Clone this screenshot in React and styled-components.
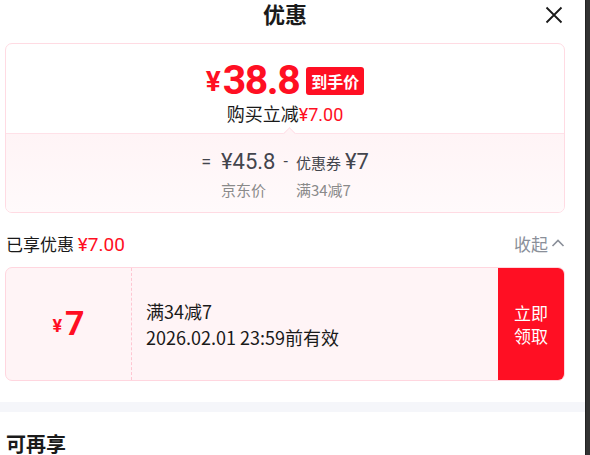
import React from 'react';
import styled, { createGlobalStyle } from 'styled-components';

const GlobalStyle = createGlobalStyle`
  html, body {
    margin: 0;
    padding: 0;
    background: #fff;
    font-family: "Noto Sans CJK SC", "Noto Sans", sans-serif;
    color: #1a1a1a;
  }
`;

const RED = '#ff0f23';
const NUM = 'Roboto, "Noto Sans CJK SC", sans-serif';

const Page = styled.div`
  display: flex;
  width: 590px;
  height: 455px;
  overflow: hidden;
`;

const Main = styled.div`
  width: 585px;
  flex: none;
`;

const ScrollTrack = styled.div`
  flex: 1;
  background: #333;
  border-left: 1px solid #222;
`;

const Header = styled.div`
  position: relative;
  height: 26px;
  padding-right: 15px;
  text-align: center;
  font-size: 22px;
  font-weight: 700;
  line-height: 26px;
  color: #1a1a1a;
`;

const Close = styled.div`
  position: absolute;
  right: 21px;
  top: 2px;
  width: 20px;
  height: 20px;
`;

const Section = styled.div`
  padding: 0 20px 0 5px;
`;

const PriceCard = styled.div`
  margin-top: 17px;
  border: 1px solid #ffdbe3;
  border-radius: 7px;
  overflow: hidden;
`;

const PriceTop = styled.div`
  padding: 16px 0 5px;
  text-align: center;
`;

const PriceRow = styled.div`
  display: flex;
  justify-content: center;
  align-items: center;
  height: 40px;
  line-height: 40px;
  color: ${RED};
  font-family: ${NUM};
`;

const Yen = styled.span`
  font-size: ${p => p.$size || 28}px;
  font-weight: 700;
  margin-right: ${p => p.$gap || 2}px;
  position: relative;
  top: ${p => p.$shift || 2}px;
`;

const BigPrice = styled.span`
  font-size: 41px;
  font-weight: 700;
  letter-spacing: -1.5px;
`;

const Badge = styled.span`
  margin-left: 7px;
  background: ${RED};
  color: #fff;
  font-family: "Noto Sans CJK SC", sans-serif;
  font-weight: 700;
  font-size: 16px;
  height: 28px;
  line-height: 28px;
  padding: 0 5px;
  border-radius: 3px;
  position: relative;
  top: 1px;
`;

const SubLine = styled.div`
  font-size: 18px;
  line-height: 26px;
  color: #1a1a1a;
`;

const Red = styled.span`
  color: ${RED};
  font-family: ${NUM};
  font-size: ${p => (p.$size ? `${p.$size}px` : 'inherit')};
`;

const PriceBottom = styled.div`
  position: relative;
  border-top: 1px solid #ffe1e8;
  background: linear-gradient(180deg, #fff4f6 0%, #fffafb 100%);
  padding: 14px 0 12px;
  display: flex;
  justify-content: center;
  align-items: flex-start;

  &::before {
    content: '';
    position: absolute;
    top: -5px;
    left: 279px;
    width: 8px;
    height: 8px;
    background: #fff4f6;
    border-top: 1px solid #ffe1e8;
    border-left: 1px solid #ffe1e8;
    transform: rotate(45deg);
  }
`;

const Col = styled.div`
  display: flex;
  flex-direction: column;
  align-items: flex-start;
`;

const Value = styled.div`
  display: flex;
  align-items: baseline;
  gap: 3px;
  line-height: 28px;
  height: 28px;
  color: #43454d;
  font-family: ${NUM};
  font-size: 22px;
`;

const Op = styled.div`
  line-height: 28px;
  font-size: ${p => p.$size || 18}px;
  color: #43454d;
  font-family: Roboto, sans-serif;
  margin: ${p => p.$margin || '0 10px 0 0'};
`;

const Small = styled.span`
  font-family: "Noto Sans CJK SC", sans-serif;
  font-size: 15px;
  margin-right: 1px;
`;

const Label = styled.div`
  font-size: 15px;
  line-height: 20px;
  color: #8a8a8a;
  margin-top: 4px;
`;

const SavedRow = styled.div`
  display: flex;
  justify-content: space-between;
  align-items: center;
  margin-top: 19px;
  height: 22px;
  padding-left: 1px;
  font-size: 17px;
`;

const Toggle = styled.div`
  display: flex;
  align-items: center;
  gap: 3px;
  color: #8a8f99;
`;

const Coupon = styled.div`
  margin-top: 13px;
  height: 112px;
  display: flex;
  background: #fff4f6;
  border: 1px solid #ffd6df;
  border-radius: 7px;
  overflow: hidden;
`;

const CouponValue = styled.div`
  width: 126px;
  flex: none;
  border-right: 1px dashed #ffc6d2;
  display: flex;
  align-items: baseline;
  justify-content: center;
  padding-top: 38px;
  box-sizing: border-box;
  color: ${RED};
  font-family: ${NUM};
  font-weight: 700;
`;

const CouponAmount = styled.span`
  font-size: 34px;
  line-height: 34px;
`;

const CouponInfo = styled.div`
  flex: 1;
  padding-left: 14px;
  display: flex;
  flex-direction: column;
  justify-content: center;
  font-size: 18px;
  line-height: 26px;
  color: #1a1a1a;
`;

const GetButton = styled.div`
  width: 66px;
  flex: none;
  background: ${RED};
  color: #fff;
  display: flex;
  align-items: center;
  justify-content: center;
  text-align: center;
  font-size: 17px;
  line-height: 23px;
`;

const Band = styled.div`
  margin-top: 21px;
  height: 10px;
  background: #f5f6fa;
`;

const MoreTitle = styled.div`
  margin-top: 20px;
  padding-left: 6px;
  font-size: 20px;
  font-weight: 700;
  line-height: 24px;
  color: #1a1a1a;
`;

const CloseIcon = () => (
  <svg width="20" height="20" viewBox="0 0 20 20">
    <path d="M2.5 2.5 L17.5 17.5 M17.5 2.5 L2.5 17.5" stroke="#1a1a1a" strokeWidth="1.8" fill="none" />
  </svg>
);

const ChevronUp = () => (
  <svg width="14" height="10" viewBox="0 0 14 10">
    <path d="M1.5 8 L7 2.5 L12.5 8" stroke="#8a8f99" strokeWidth="1.6" fill="none" />
  </svg>
);

export default function App() {
  return (
    <>
      <GlobalStyle />
      <Page>
        <Main>
          <Header>
            优惠
            <Close><CloseIcon /></Close>
          </Header>
          <Section>
            <PriceCard>
              <PriceTop>
                <PriceRow>
                  <Yen>¥</Yen>
                  <BigPrice>38.8</BigPrice>
                  <Badge>到手价</Badge>
                </PriceRow>
                <SubLine>
                  购买立减<Red>¥7.00</Red>
                </SubLine>
              </PriceTop>
              <PriceBottom>
                <Op>=</Op>
                <Col>
                  <Value>¥45.8</Value>
                  <Label>京东价</Label>
                </Col>
                <Op $size={16} $margin="0 8px">-</Op>
                <Col>
                  <Value><Small>优惠券</Small>¥7</Value>
                  <Label>满34减7</Label>
                </Col>
              </PriceBottom>
            </PriceCard>
            <SavedRow>
              <span>
                已享优惠 <Red $size={19}>¥7.00</Red>
              </span>
              <Toggle>
                收起
                <ChevronUp />
              </Toggle>
            </SavedRow>
            <Coupon>
              <CouponValue>
                <Yen $size={18} $gap={3} $shift={-3}>¥</Yen>
                <CouponAmount>7</CouponAmount>
              </CouponValue>
              <CouponInfo>
                <div>满34减7</div>
                <div>2026.02.01 23:59前有效</div>
              </CouponInfo>
              <GetButton>
                立即
                <br />
                领取
              </GetButton>
            </Coupon>
          </Section>
          <Band />
          <MoreTitle>可再享</MoreTitle>
        </Main>
        <ScrollTrack />
      </Page>
    </>
  );
}
